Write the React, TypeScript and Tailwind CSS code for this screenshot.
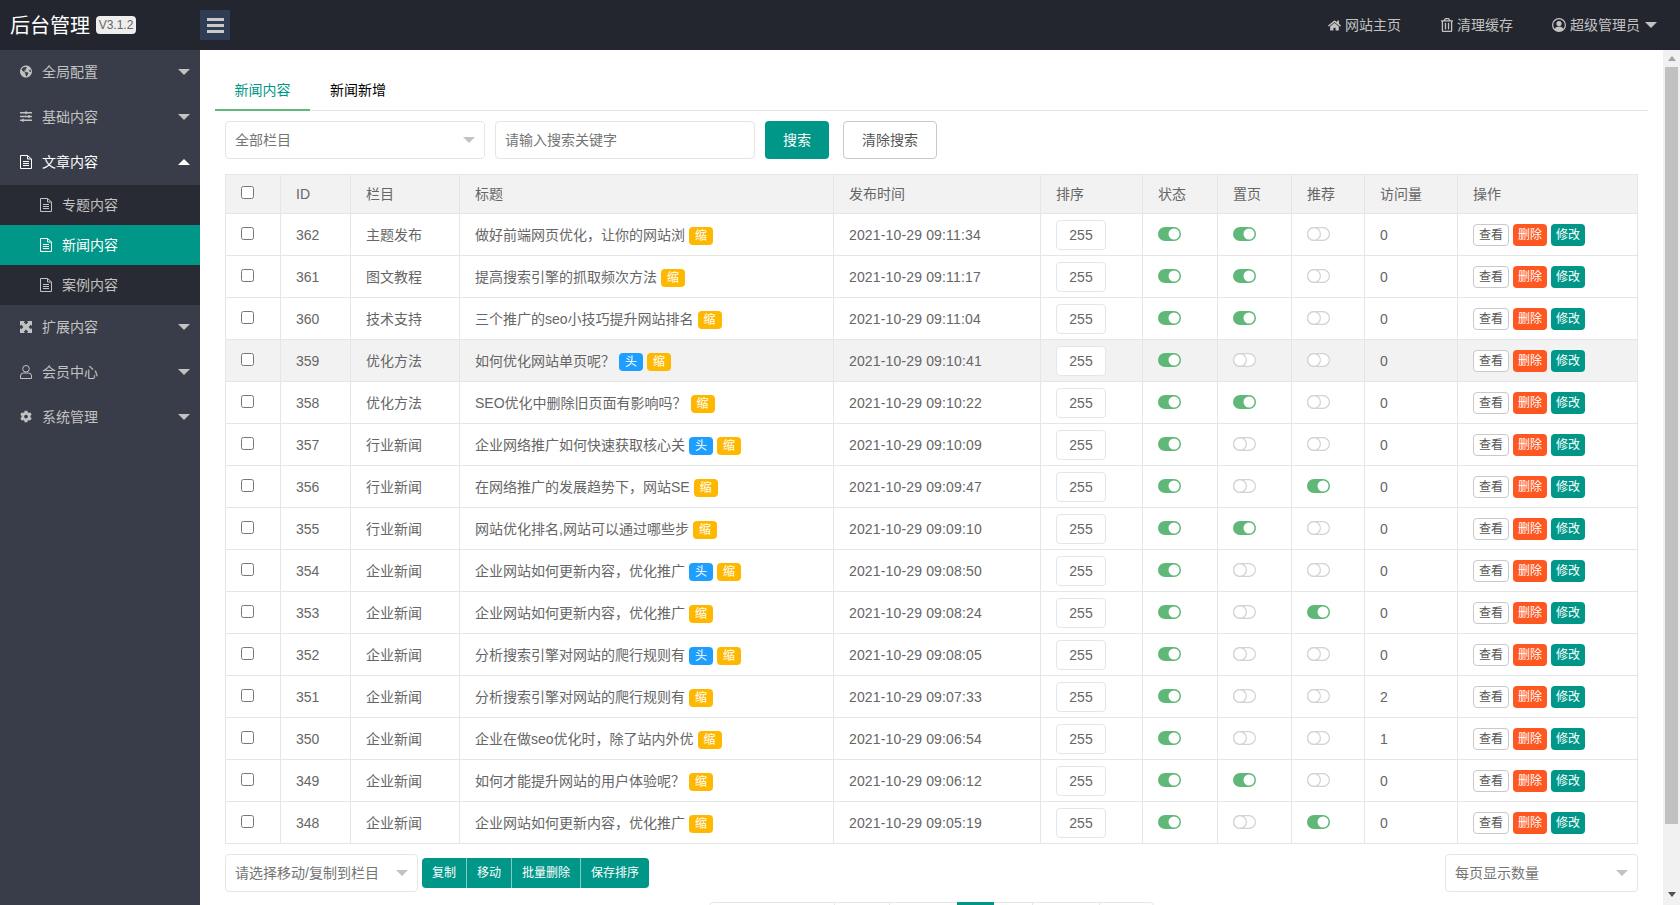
import React from 'react';
import { FaCog, FaGlobeAmericas, FaHome, FaRegTrashAlt, FaSlidersH } from 'react-icons/fa';

type Row = {
  id: number;
  cat: string;
  title: string;
  hot?: boolean;
  time: string;
  top?: boolean;
  rec?: boolean;
  views?: number;
  hover?: boolean;
};

const rows: Row[] = [
  { id: 362, cat: '主题发布', title: '做好前端网页优化，让你的网站浏', time: '09:11:34', top: true },
  { id: 361, cat: '图文教程', title: '提高搜索引擎的抓取频次方法', time: '09:11:17', top: true },
  { id: 360, cat: '技术支持', title: '三个推广的seo小技巧提升网站排名', time: '09:11:04', top: true },
  { id: 359, cat: '优化方法', title: '如何优化网站单页呢？', hot: true, time: '09:10:41', hover: true },
  { id: 358, cat: '优化方法', title: 'SEO优化中删除旧页面有影响吗？', time: '09:10:22', top: true },
  { id: 357, cat: '行业新闻', title: '企业网络推广如何快速获取核心关', hot: true, time: '09:10:09' },
  { id: 356, cat: '行业新闻', title: '在网络推广的发展趋势下，网站SE', time: '09:09:47', rec: true },
  { id: 355, cat: '行业新闻', title: '网站优化排名,网站可以通过哪些步', time: '09:09:10', top: true },
  { id: 354, cat: '企业新闻', title: '企业网站如何更新内容，优化推广', hot: true, time: '09:08:50' },
  { id: 353, cat: '企业新闻', title: '企业网站如何更新内容，优化推广', time: '09:08:24', rec: true },
  { id: 352, cat: '企业新闻', title: '分析搜索引擎对网站的爬行规则有', hot: true, time: '09:08:05' },
  { id: 351, cat: '企业新闻', title: '分析搜索引擎对网站的爬行规则有', time: '09:07:33', views: 2 },
  { id: 350, cat: '企业新闻', title: '企业在做seo优化时，除了站内外优', time: '09:06:54', views: 1 },
  { id: 349, cat: '企业新闻', title: '如何才能提升网站的用户体验呢？', time: '09:06:12', top: true },
  { id: 348, cat: '企业新闻', title: '企业网站如何更新内容，优化推广', time: '09:05:19', rec: true },
];

function FileIcon() {
  return (
    <svg width="12" height="14" viewBox="0 0 12 14" fill="none" stroke="currentColor" className="shrink-0">
      <path d="M.5.5h7l4 3.500v9.500h-11z" />
      <path d="M7.500.5V4h4M3 6.500h6M3 8.500h6M3 10.500h6" />
    </svg>
  );
}

function UserIcon() {
  return (
    <svg width="12" height="14" viewBox="0 0 12 14" fill="none" stroke="currentColor" className="shrink-0">
      <ellipse cx="6" cy="3.800" rx="3.300" ry="3.300" />
      <path d="M.5 13.500v-2.500q0-3 3-3h5q3 0 3 3v2.500z" />
    </svg>
  );
}

function ExpandIcon() {
  return (
    <svg width="12" height="12" viewBox="0 0 12 12" fill="currentColor" className="shrink-0">
      <path d="M0 0H5L3.800 1.200 6 3.400 8.200 1.200 7 0H12V5L10.800 3.800 8.600 6 10.800 8.200 12 7V12H7L8.200 10.800 6 8.600 3.800 10.800 5 12H0V7L1.200 8.200 3.400 6 1.200 3.800 0 5Z" />
    </svg>
  );
}

function AccountIcon() {
  return (
    <svg width="14" height="14" viewBox="0 0 14 14" className="shrink-0">
      <circle cx="7" cy="7" r="6.400" fill="none" stroke="currentColor" strokeWidth="1.200" />
      <circle cx="7" cy="5.500" r="2.600" fill="currentColor" />
      <path d="M2.500 11.500Q3.500 8.500 7 8.500T11.500 11.500A6.400 6.400 0 0 1 2.500 11.500Z" fill="currentColor" />
    </svg>
  );
}

function Caret({ up }: { up?: boolean }) {
  if (up) return <span className="h-0 w-0 border-x-[6px] border-b-[6px] border-x-transparent border-b-white" />;
  return <span className="h-0 w-0 border-x-[6px] border-t-[6px] border-x-transparent border-t-[#c2c2c2]" />;
}

function MenuItem({ icon, label, open }: { icon: React.ReactNode; label: string; open?: boolean }) {
  return (
    <div className={`flex h-[45px] items-center pb-[2px] pl-5 pr-[10px] ${open ? 'text-white' : 'text-[#c2c2c2]'}`}>
      <span className="flex w-[12px] shrink-0 justify-center">{icon}</span>
      <span className="ml-[10px] flex-1">{label}</span>
      <Caret up={open} />
    </div>
  );
}

function SubItem({ label, active }: { label: string; active?: boolean }) {
  return (
    <div className={`flex h-10 items-center gap-[10px] pl-10 ${active ? 'bg-[#009688] text-white' : 'text-[#c2c2c2]'}`}>
      <FileIcon />
      <span>{label}</span>
    </div>
  );
}

function Toggle({ on }: { on?: boolean }) {
  if (on) {
    return (
      <svg width="23" height="14" viewBox="0 0 23 14" className="-mt-[2px] block">
        <rect width="23" height="14" rx="7" fill="#5FB878" />
        <circle cx="16" cy="7" r="5.500" fill="#fff" />
      </svg>
    );
  }
  return (
    <svg width="23" height="14" viewBox="0 0 23 14" fill="#fff" stroke="#d2d2d2" strokeWidth="1.200" className="-mt-[2px] block">
      <rect x=".6" y=".6" width="21.800" height="12.800" rx="6.400" />
      <circle cx="7" cy="7" r="6.400" />
    </svg>
  );
}

function SelectBox({ label, className }: { label: string; className: string }) {
  return (
    <div className={`flex h-[38px] items-center justify-between rounded-sm border border-[#e6e6e6] bg-white pl-[9px] pr-[9px] text-[#757575] ${className}`}>
      <span>{label}</span>
      <span className="h-0 w-0 border-x-[6px] border-t-[6px] border-x-transparent border-t-[#c2c2c2]" />
    </div>
  );
}

function Badge({ color, text }: { color: string; text: string }) {
  return <span className={`mt-[2px] flex h-[18px] w-6 shrink-0 items-center justify-center rounded-sm text-xs leading-none text-white ${color}`}>{text}</span>;
}

const headCell = 'border border-[#e6e6e6] px-[15px] py-0 text-left font-normal';
const cell = 'border border-[#e6e6e6] px-[15px] py-0';

export default function App() {
  return (
    <div className="flex h-screen flex-col overflow-hidden bg-white font-['Liberation_Sans','Noto_Sans_CJK_SC',sans-serif] text-sm text-[#666]">
      <header className="flex h-[50px] shrink-0 items-center bg-[#23262e]">
        <div className="flex w-[200px] shrink-0 items-center pl-[10px]">
          <span className="pt-[2px] text-xl text-white">后台管理</span>
          <span className="ml-[6px] flex h-[18px] w-10 items-center justify-center rounded-sm bg-[#eee] text-xs text-[#666]">V3.1.2</span>
        </div>
        <button className="flex h-[30px] w-[30px] flex-col items-center justify-center gap-[3px] bg-[#2f3d54]">
          <span className="h-[3px] w-[17px] bg-[#c9c9c9]" />
          <span className="h-[3px] w-[17px] bg-[#c9c9c9]" />
          <span className="h-[3px] w-[17px] bg-[#c9c9c9]" />
        </button>
        <nav className="ml-auto flex items-center pr-[23px] text-[#c2c2c2]">
          <FaHome size={13} />
          <span className="ml-1">网站主页</span>
          <FaRegTrashAlt size={14} className="ml-[39px]" />
          <span className="ml-[3px]">清理缓存</span>
          <span className="ml-[39px]"><AccountIcon /></span>
          <span className="ml-1">超级管理员</span>
          <span className="ml-[5px] h-0 w-0 border-x-[6px] border-t-[6px] border-x-transparent border-t-[#c2c2c2]" />
        </nav>
      </header>

      <div className="flex min-h-0 flex-1">
        <aside className="w-[200px] shrink-0 bg-[#393d49]">
          <MenuItem icon={<FaGlobeAmericas size={13} />} label="全局配置" />
          <MenuItem icon={<FaSlidersH size={13} />} label="基础内容" />
          <MenuItem icon={<FileIcon />} label="文章内容" open />
          <div className="bg-[#282b33]">
            <SubItem label="专题内容" />
            <SubItem label="新闻内容" active />
            <SubItem label="案例内容" />
          </div>
          <MenuItem icon={<ExpandIcon />} label="扩展内容" />
          <MenuItem icon={<UserIcon />} label="会员中心" />
          <MenuItem icon={<FaCog size={13} />} label="系统管理" />
        </aside>

        <main className="min-w-0 flex-1 overflow-hidden px-[15px] pt-5">
          <div className="flex h-[41px] border-b border-[#e6e6e6]">
            <div className="flex h-[41px] w-[95px] items-center justify-center border-b-2 border-[#5fb878] text-[#009688]">新闻内容</div>
            <div className="flex h-[41px] items-center px-5 pb-[2px] text-black">新闻新增</div>
          </div>

          <div className="mt-[10px] flex pl-[10px]">
            <SelectBox label="全部栏目" className="w-[260px]" />
            <input
              placeholder="请输入搜索关键字"
              className="ml-[10px] h-[38px] w-[260px] rounded-sm border border-[#e6e6e6] pl-[9px] outline-none placeholder:text-[#757575]"
            />
            <button className="ml-[10px] h-[38px] w-[64px] rounded-sm bg-[#009688] text-white">搜索</button>
            <button className="ml-[14px] h-[38px] w-[94px] rounded-sm border border-[#c9c9c9] bg-white text-[#555]">清除搜索</button>
          </div>

          <div className="mt-[15px] pl-[10px]">
            <table className="w-[1412px] table-fixed border-collapse">
              <colgroup>
                <col className="w-[55px]" />
                <col className="w-[70px]" />
                <col className="w-[109px]" />
                <col className="w-[374px]" />
                <col className="w-[207px]" />
                <col className="w-[102px]" />
                <col className="w-[75px]" />
                <col className="w-[74px]" />
                <col className="w-[73px]" />
                <col className="w-[93px]" />
                <col className="w-[180px]" />
              </colgroup>
              <thead>
                <tr className="h-[39px] bg-[#f2f2f2]">
                  <th className={headCell}>
                    <input type="checkbox" className="-mt-[3px] block h-[13px] w-[13px]" />
                  </th>
                  <th className={headCell}>ID</th>
                  <th className={headCell}>栏目</th>
                  <th className={headCell}>标题</th>
                  <th className={headCell}>发布时间</th>
                  <th className={headCell}>排序</th>
                  <th className={headCell}>状态</th>
                  <th className={headCell}>置页</th>
                  <th className={headCell}>推荐</th>
                  <th className={headCell}>访问量</th>
                  <th className={headCell}>操作</th>
                </tr>
              </thead>
              <tbody>
                {rows.map((r) => (
                  <tr key={r.id} className={`h-[42px] ${r.hover ? 'bg-[#f2f2f2]' : ''}`}>
                    <td className={cell}>
                      <input type="checkbox" className="-mt-[3px] block h-[13px] w-[13px]" />
                    </td>
                    <td className={cell}>{r.id}</td>
                    <td className={cell}>{r.cat}</td>
                    <td className={cell}>
                      <div className="flex items-center gap-1 whitespace-nowrap">
                        <span>{r.title}</span>
                        {r.hot && <Badge color="bg-[#1e9fff]" text="头" />}
                        <Badge color="bg-[#ffb800]" text="缩" />
                      </div>
                    </td>
                    <td className={`${cell} tracking-[0.15px]`}>2021-10-29 {r.time}</td>
                    <td className={cell}>
                      <input
                        readOnly
                        value="255"
                        className="block h-[30px] w-[50px] rounded-sm border border-[#e6e6e6] bg-white text-center outline-none"
                      />
                    </td>
                    <td className={cell}><Toggle on /></td>
                    <td className={cell}><Toggle on={r.top} /></td>
                    <td className={cell}><Toggle on={r.rec} /></td>
                    <td className={cell}>{r.views ?? 0}</td>
                    <td className={cell}>
                      <div className="flex gap-1 text-xs">
                        <button className="h-[22px] w-9 rounded-sm border border-[#c9c9c9] bg-white text-[#555]">查看</button>
                        <button className="h-[22px] w-[34px] rounded-sm bg-[#ff5722] text-white">删除</button>
                        <button className="h-[22px] w-[34px] rounded-sm bg-[#009688] text-white">修改</button>
                      </div>
                    </td>
                  </tr>
                ))}
              </tbody>
            </table>
          </div>

          <div className="mt-[10px] flex items-center pl-[10px] pr-[10px]">
            <SelectBox label="请选择移动/复制到栏目" className="w-[193px]" />
            <div className="ml-1 flex h-[30px] overflow-hidden rounded-sm bg-[#009688] text-xs text-white">
              <button className="w-11">复制</button>
              <button className="w-[45px] border-l border-white/50">移动</button>
              <button className="w-[69px] border-l border-white/50">批量删除</button>
              <button className="w-[69px] border-l border-white/50">保存排序</button>
            </div>
            <SelectBox label="每页显示数量" className="ml-auto w-[193px]" />
          </div>

          {/* only the top edge of the pager fits in the window */}
          <div className="mt-[10px] flex justify-center">
            <div className="flex h-[30px] rounded-sm border border-[#e6e6e6]">
              <span className="w-[124px]" />
              <span className="w-[55px] border-l border-[#e6e6e6]" />
              <span className="w-[68px] border-l border-[#e6e6e6]" />
              <span className="-mt-px w-[37px] bg-[#009688]" />
              <span className="w-[38px]" />
              <span className="w-[67px] border-l border-[#e6e6e6]" />
              <span className="w-[54px] border-l border-[#e6e6e6]" />
            </div>
          </div>
        </main>

        <div className="flex w-[17px] shrink-0 flex-col items-center bg-[#f1f1f1]">
          <span className="mt-[6px] h-0 w-0 border-x-[4px] border-b-[5px] border-x-transparent border-b-[#a3a3a3]" />
          <span className="mt-[6px] h-[757px] w-[13px] bg-[#c1c1c1]" />
          <span className="mt-[68px] h-0 w-0 border-x-[4px] border-t-[5px] border-x-transparent border-t-[#505050]" />
        </div>
      </div>
    </div>
  );
}
